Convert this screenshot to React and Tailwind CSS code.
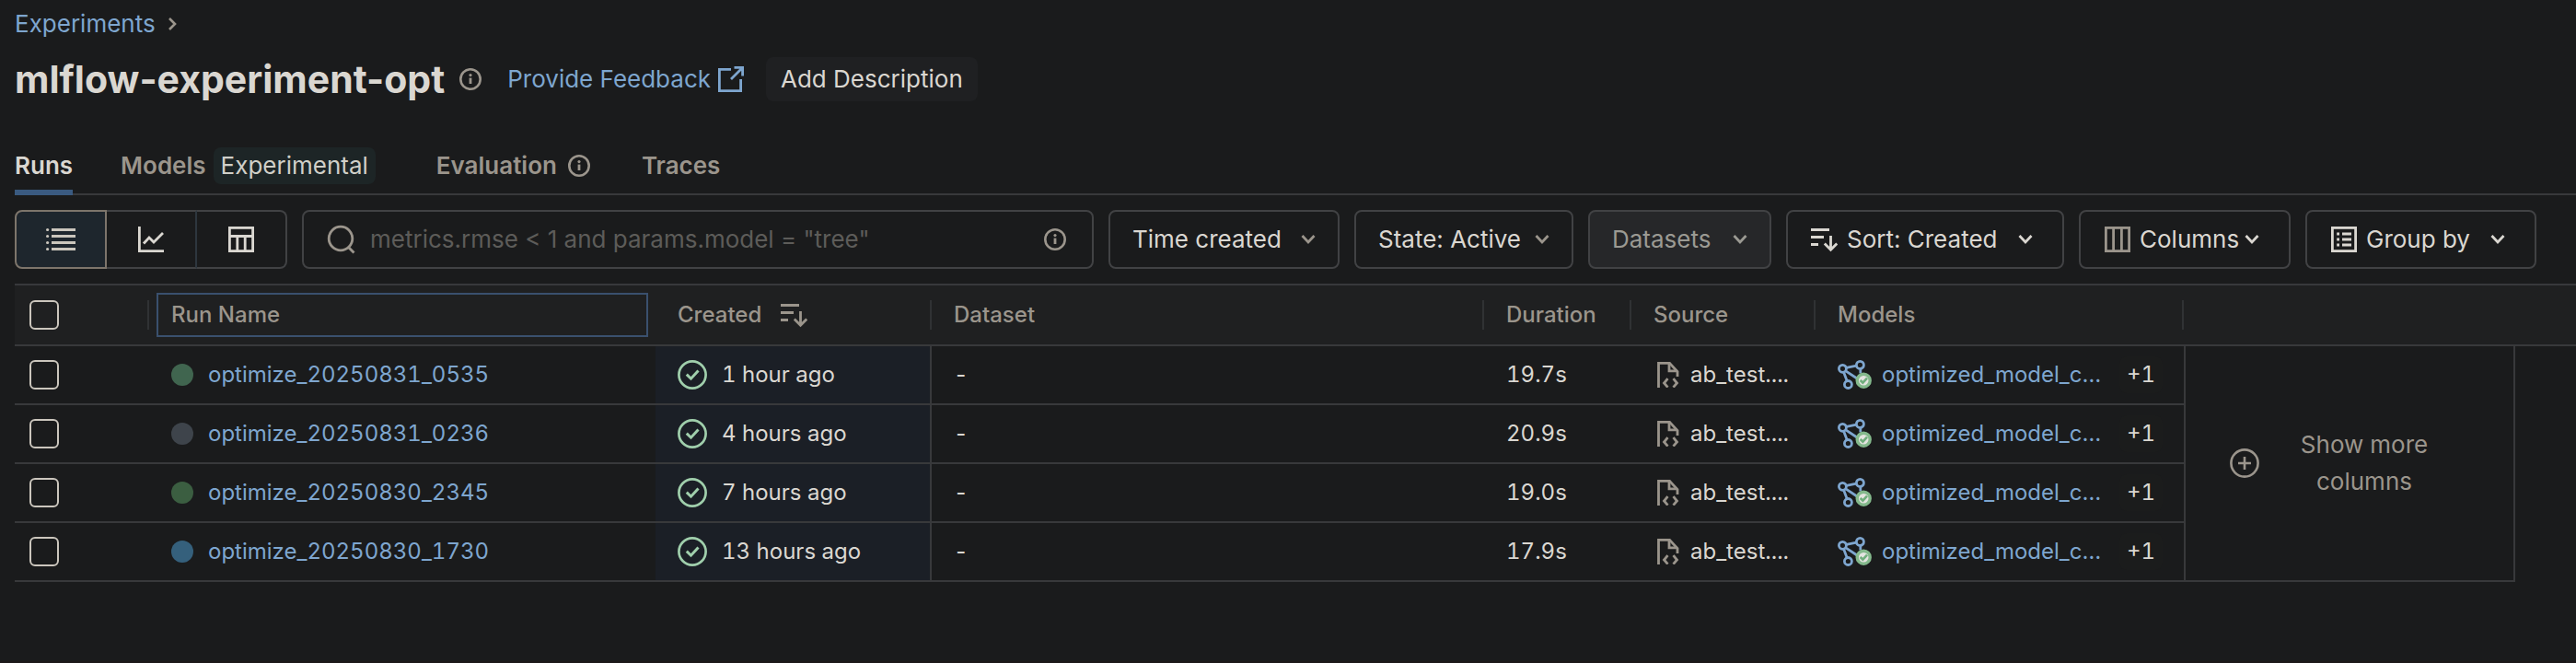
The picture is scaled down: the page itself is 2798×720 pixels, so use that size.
import React from "react";

const RUNS = [
  { name: "optimize_20250831_0535", created: "1 hour ago", duration: "19.7s", dot: "bg-[#40654f]" },
  { name: "optimize_20250831_0236", created: "4 hours ago", duration: "20.9s", dot: "bg-[#3e444b]" },
  { name: "optimize_20250830_2345", created: "7 hours ago", duration: "19.0s", dot: "bg-[#3b5e41]" },
  { name: "optimize_20250830_1730", created: "13 hours ago", duration: "17.9s", dot: "bg-[#35607c]" },
];

function InfoIcon({ className = "" }) {
  return (
    <svg viewBox="0 0 24 24" className={`size-6 shrink-0 ${className}`} fill="none" aria-hidden="true">
      <circle cx="12" cy="12" r="10.7" stroke="currentColor" strokeWidth="2.6" />
      <rect x="10.6" y="10.6" width="2.8" height="6.4" fill="currentColor" />
      <circle cx="12" cy="7.6" r="1.6" fill="currentColor" />
    </svg>
  );
}

function Chevron({ className = "" }) {
  return (
    <svg viewBox="0 0 16 16" className={`size-4 shrink-0 ${className}`} fill="none" stroke="currentColor" strokeWidth="2.8" aria-hidden="true">
      <path d="M1.5 4 8 11l6.500-7" />
    </svg>
  );
}

function SortIcon() {
  return (
    <svg viewBox="0 0 30 28" className="h-7 w-[30px] shrink-0" fill="none" stroke="currentColor" strokeWidth="3" aria-hidden="true">
      <path d="M1 3.400h20M1 11.400h14M1 19.400h8" />
      <path d="M22.500 10v15M15.800 18.500l6.700 6.800 6.700-6.800" strokeWidth="2.8" />
    </svg>
  );
}

function ListIcon() {
  return (
    <svg viewBox="0 0 32 28" className="h-7 w-8" fill="currentColor" aria-hidden="true">
      {[3.5, 10.5, 17.5, 24.5].map((y) => (
        <g key={y}>
          <circle cx="1.600" cy={y} r="1.600" />
          <rect x="6" y={y - 1.5} width="26" height="3" />
        </g>
      ))}
    </svg>
  );
}

function LineChartIcon() {
  return (
    <svg viewBox="0 0 28 28" className="size-7" fill="none" stroke="currentColor" strokeWidth="2.8" aria-hidden="true">
      <path d="M1.400 0v26.600H28" />
      <path d="M6 18.500l6-6.500 5 5L27 7" />
    </svg>
  );
}

function TableIcon() {
  return (
    <svg viewBox="0 0 28 28" className="size-7" fill="none" stroke="currentColor" strokeWidth="2.800" aria-hidden="true">
      <rect x="1.400" y="1.400" width="25.200" height="25.200" />
      <path d="M0 10.500h28M9.800 10.500V28M18.200 10.500V28" />
    </svg>
  );
}

function ColumnsIcon() {
  return (
    <svg viewBox="0 0 28 28" className="size-7 shrink-0 text-[#9b958c]" fill="none" stroke="currentColor" strokeWidth="2.8" aria-hidden="true">
      <rect x="1.400" y="1.400" width="25.200" height="25.200" />
      <path d="M9.600 0v28M18.400 0v28" />
    </svg>
  );
}

function GroupIcon() {
  return (
    <svg viewBox="0 0 28 28" className="size-7 shrink-0" fill="none" stroke="currentColor" strokeWidth="2.8" aria-hidden="true">
      <rect x="1.400" y="1.400" width="25.200" height="25.200" />
      <path d="M12 8h10M12 14h10M12 20h10" />
      <path d="M6.200 8h2.800M6.200 14h2.800M6.200 20h2.800" />
    </svg>
  );
}

function SearchIcon() {
  return (
    <svg viewBox="0 0 32 32" className="size-8 shrink-0" fill="none" stroke="currentColor" strokeWidth="2.8" aria-hidden="true">
      <circle cx="16" cy="15" r="12.800" />
      <path d="M24.500 24.500l6 6" />
    </svg>
  );
}

function ExternalIcon() {
  return (
    <svg viewBox="0 0 28 28" className="size-7" fill="none" stroke="currentColor" strokeWidth="2.8" aria-hidden="true">
      <path d="M14 3.400H1.400v23.200h23.200V14" />
      <path d="M17.500 1.400h9.100v9.100M26 2 14 14" />
    </svg>
  );
}

function CheckCircle() {
  return (
    <svg viewBox="0 0 32 32" className="size-8 shrink-0 text-[#a0cfac]" fill="none" stroke="currentColor" strokeWidth="2.700" aria-hidden="true">
      <circle cx="16" cy="16" r="14.600" />
      <path d="M9.800 15.600l4.700 4.600 8-8.600" strokeWidth="3" />
    </svg>
  );
}

function FileCodeIcon() {
  return (
    <svg viewBox="0 0 24 28" className="h-7 w-6 shrink-0 text-[#9b958c]" fill="none" stroke="currentColor" strokeWidth="2.800" aria-hidden="true">
      <path d="M1.500 28V1.400H13.500L22 10.500V16" />
      <path d="M13 1.400v8.400h8.500" />
      <path d="M11.500 18.200 7.500 23l4 4.600M17.500 18.200l4 4.800-4 4.600" />
    </svg>
  );
}

function ModelIcon() {
  return (
    <svg viewBox="0 0 38 32" className="h-8 w-[38px] shrink-0" fill="none" aria-hidden="true">
      <g stroke="#7ea6cf" strokeWidth="2.800">
        <circle cx="5.400" cy="9.300" r="4" />
        <circle cx="24.400" cy="5.400" r="4" />
        <circle cx="11.400" cy="26.500" r="4" />
        <path d="M9.400 8.400l11-2.200M6.600 13.200l3.500 9.400M8.800 11.800l13 8.700M24.800 9.400v5" />
      </g>
      <circle cx="28.200" cy="22.200" r="7" fill="#e4e4e0" stroke="#84b98c" strokeWidth="3.400" />
      <path d="M24.600 22l2.800 2.600 4.600-5" stroke="#6fae7c" strokeWidth="2.600" />
    </svg>
  );
}

function PlusCircle() {
  return (
    <svg viewBox="0 0 32 32" className="size-8 shrink-0" fill="none" stroke="currentColor" strokeWidth="2.600" aria-hidden="true">
      <circle cx="16" cy="16" r="14.600" />
      <path d="M16 9v14M9 16h14" />
    </svg>
  );
}

function Checkbox({ label }) {
  return (
    <input
      type="checkbox"
      aria-label={label}
      className="block size-8 appearance-none rounded-md border-2 border-[#cbc6bd] checked:bg-[#7ea6cf]"
    />
  );
}

function ToolButton({ className = "", children }) {
  return (
    <button type="button" className={`flex h-16 shrink-0 items-center rounded-lg border-2 border-[#414244] ${className}`}>
      {children}
    </button>
  );
}

function HeadCell({ className = "", divider = true, children }) {
  return (
    <th scope="col" className={`h-16 p-0 text-left font-medium ${className}`}>
      <div className="flex h-16 items-center">
        <div className="flex grow items-center">{children}</div>
        {divider && <span className="h-8 w-0.5 bg-[#303234]" />}
      </div>
    </th>
  );
}

export default function App() {
  return (
    <div className="flex min-h-screen flex-col overflow-hidden border-b-2 border-[#1c1819] bg-[#1a1b1c] pl-4 font-['Inter','Liberation_Sans',sans-serif] text-[26px] leading-10 text-[#dad7d1]">
      <nav aria-label="Breadcrumb" className="flex items-center gap-3 pt-1.5">
        <a href="#experiments" className="text-[#7ea6cf]">Experiments</a>
        <svg viewBox="0 0 12 16" className="h-4 w-3 text-[#9b958c]" fill="none" stroke="currentColor" strokeWidth="2.600" aria-hidden="true">
          <path d="M3 2l6 6-6 6" />
        </svg>
      </nav>

      <header className="flex items-center pt-2">
        <h1 className="text-[41px] leading-[64px] font-bold">mlflow-experiment-opt</h1>
        <InfoIcon className="ml-4 text-[#9b958c]" />
        <a href="#feedback" className="ml-7 flex items-center gap-2 text-[#7ea6cf]">
          Provide Feedback
          <ExternalIcon />
        </a>
        <button type="button" className="ml-6 h-12 rounded-lg bg-[#1f2022] px-4">Add Description</button>
      </header>

      <div role="tablist" className="mt-8 flex h-[62px] border-b-2 border-[#38393b] font-semibold text-[#9b958c]">
        <button type="button" role="tab" aria-selected="true" className="-mb-0.5 border-b-6 border-[#3a5a80] pt-1 text-[#dad7d1]">Runs</button>
        <button type="button" role="tab" aria-selected="false" className="ml-13 flex items-center gap-2">
          Models
          <span className="rounded-lg bg-[#1d2526] px-2 font-normal text-[#d0cfc8]">Experimental</span>
        </button>
        <button type="button" role="tab" aria-selected="false" className="ml-[66px] flex items-center gap-3">
          Evaluation
          <InfoIcon />
        </button>
        <button type="button" role="tab" aria-selected="false" className="ml-14">Traces</button>
      </div>

      <div className="mt-4 mr-[43px] flex gap-4">
        <div role="group" aria-label="View" className="flex h-16 shrink-0">
          <button type="button" aria-label="List view" className="flex w-[100px] items-center justify-center rounded-l-lg border-2 border-[#7d756b] bg-[#1e262d] text-[#cbc6bd]">
            <ListIcon />
          </button>
          <button type="button" aria-label="Chart view" className="flex w-[98px] items-center justify-center border-y-2 border-r-2 border-y-[#414244] border-r-[#2d363e]">
            <LineChartIcon />
          </button>
          <button type="button" aria-label="Table view" className="flex w-[98px] items-center justify-center rounded-r-lg border-y-2 border-r-2 border-[#414244]">
            <TableIcon />
          </button>
        </div>

        <div className="flex h-16 min-w-0 grow items-center gap-4 rounded-lg border-2 border-[#414244] pr-7 pl-6 text-[#9b958c]">
          <SearchIcon />
          <input
            type="text"
            aria-label="Search runs"
            placeholder={'metrics.rmse < 1 and params.model = "tree"'}
            className="min-w-0 grow bg-transparent outline-none placeholder:text-[#5d5c59]"
          />
          <InfoIcon />
        </div>

        <ToolButton className="w-[251px] justify-between px-6">Time created<Chevron className="text-[#9b958c]" /></ToolButton>
        <ToolButton className="w-[238px] justify-between px-6">State: Active<Chevron className="text-[#9b958c]" /></ToolButton>
        <ToolButton className="w-[199px] justify-between bg-[#262729] px-6 text-[#9b9a93]">Datasets<Chevron /></ToolButton>
        <ToolButton className="w-[302px] px-6"><SortIcon /><span className="ml-2.5 grow text-left">Sort: Created</span><Chevron className="mr-2" /></ToolButton>
        <ToolButton className="w-[230px] pr-6 pl-[26px]"><ColumnsIcon /><span className="ml-2.5 grow text-left">Columns</span><Chevron className="mr-2" /></ToolButton>
        <ToolButton className="w-[251px] pr-6 pl-[26px]"><GroupIcon /><span className="ml-2.5 grow text-left">Group by</span><Chevron className="mr-2" /></ToolButton>
      </div>

      <table className="mt-4 w-full table-fixed border-separate border-spacing-0 text-[24px] tabular-nums">
        <colgroup>
          <col className="w-[146px]" />
          <col className="w-[550px]" />
          <col className="w-[300px]" />
          <col />
          <col className="w-[160px]" />
          <col className="w-[200px]" />
          <col className="w-[400px]" />
          <col className="w-[360px]" />
          <col className="w-[66px]" />
        </colgroup>
        <thead>
          <tr className="bg-[#1f2021] text-[#9b958c] [&>th]:border-y-2 [&>th]:border-[#38393b]">
            <HeadCell className="pl-4"><Checkbox label="Select all runs" /></HeadCell>
            <HeadCell divider={false} className="pr-2 pl-2">
              <div className="flex h-12 grow items-center border-2 border-[#3a506e] pl-3.5">Run Name</div>
            </HeadCell>
            <HeadCell className="pl-6">Created<span className="ml-5"><SortIcon /></span></HeadCell>
            <HeadCell className="pl-6">Dataset</HeadCell>
            <HeadCell className="pl-6">Duration</HeadCell>
            <HeadCell className="pl-6">Source</HeadCell>
            <HeadCell className="pl-6">Models</HeadCell>
            <th colSpan={2} />
          </tr>
        </thead>
        <tbody>
          {RUNS.map((run, i) => (
            <tr key={run.name} className="[&>td]:h-16 [&>td]:border-b-2 [&>td]:border-[#38393b] [&>td]:p-0">
              <td><div className="pl-4"><Checkbox label={`Select ${run.name}`} /></div></td>
              <td>
                <div className="flex items-center gap-4 pl-6">
                  <span className={`size-6 rounded-full ${run.dot}`} />
                  <a href={`#${run.name}`} className="text-[#7ea6cf]">{run.name}</a>
                </div>
              </td>
              <td className="border-r-2 bg-[#1b1f26]">
                <div className="flex items-center gap-4 pl-6"><CheckCircle />{run.created}</div>
              </td>
              <td><div className="pl-6">-</div></td>
              <td><div className="pl-6">{run.duration}</div></td>
              <td>
                <div className="flex items-center gap-3 pl-7">
                  <FileCodeIcon />
                  <span>ab_test....</span>
                </div>
              </td>
              <td>
                <div className="flex items-center pl-6">
                  <ModelIcon />
                  <a href="#model" className="ml-2.5 w-[248px] text-[#7ea6cf]">optimized_model_c…</a>
                  <button type="button" className="ml-2.5 rounded-lg bg-[#1b1c1c] px-2">+1</button>
                </div>
              </td>
              {i === 0 && (
                <td rowSpan={4} className="border-x-2 bg-[#1a1b1c]">
                  <button type="button" className="flex w-full items-center justify-center gap-10 pr-10 text-[26px] text-[#9b958c]">
                    <PlusCircle />
                    <span className="w-[148px] text-center">Show more columns</span>
                  </button>
                </td>
              )}
            </tr>
          ))}
        </tbody>
      </table>
    </div>
  );
}
